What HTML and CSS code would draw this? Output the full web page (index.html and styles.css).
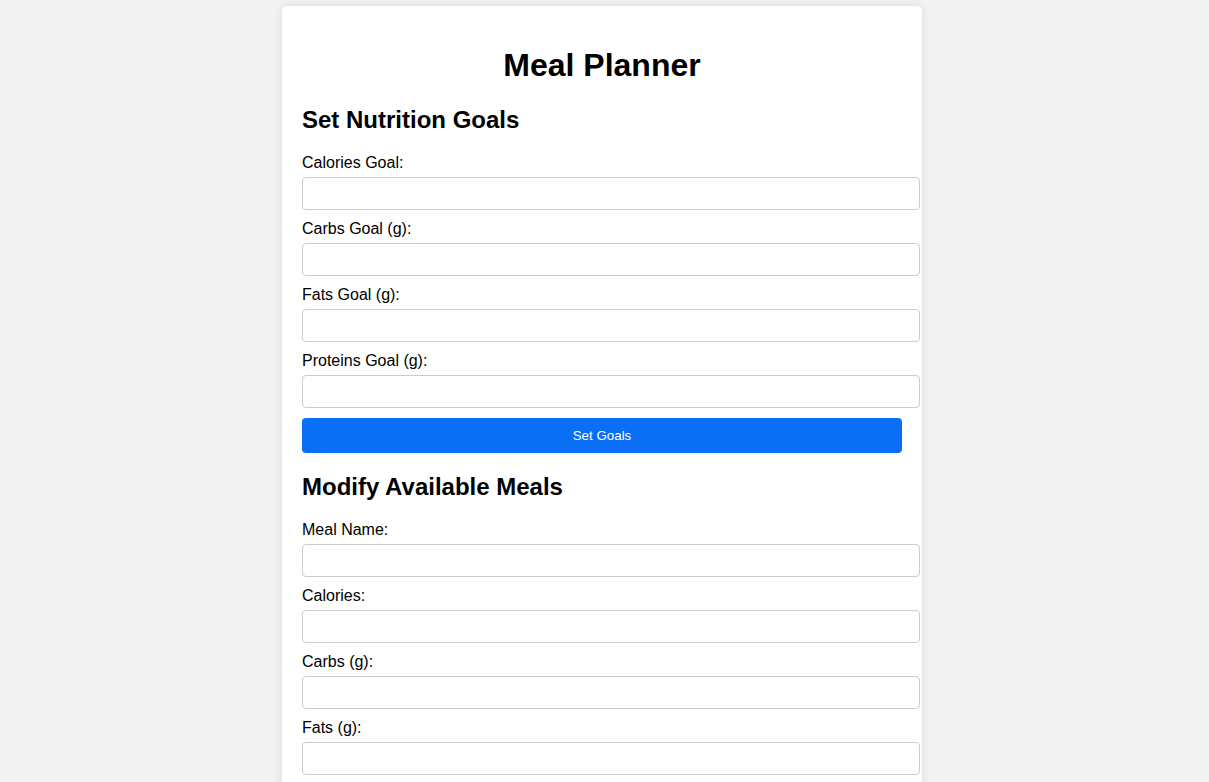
FILE: index.html
```html
<!DOCTYPE html>
<html lang="en">
<head>
<meta charset="utf-8">
<title>Meal Planner</title>
<link rel="stylesheet" href="styles.css">
</head>
<body>
<div class="container">
  <h1 class="title">Meal Planner</h1>
  <h2 class="section-title">Set Nutrition Goals</h2>
  <form class="form">
    <label class="field-label" for="cal-goal">Calories Goal:</label>
    <input class="field-input" type="number" id="cal-goal">
    <label class="field-label" for="carb-goal">Carbs Goal (g):</label>
    <input class="field-input" type="number" id="carb-goal">
    <label class="field-label" for="fat-goal">Fats Goal (g):</label>
    <input class="field-input" type="number" id="fat-goal">
    <label class="field-label" for="prot-goal">Proteins Goal (g):</label>
    <input class="field-input" type="number" id="prot-goal">
    <button class="btn" type="button">Set Goals</button>
  </form>
  <h2 class="section-title">Modify Available Meals</h2>
  <form class="form">
    <label class="field-label" for="meal-name">Meal Name:</label>
    <input class="field-input" type="text" id="meal-name">
    <label class="field-label" for="meal-cal">Calories:</label>
    <input class="field-input" type="number" id="meal-cal">
    <label class="field-label" for="meal-carb">Carbs (g):</label>
    <input class="field-input" type="number" id="meal-carb">
    <label class="field-label" for="meal-fat">Fats (g):</label>
    <input class="field-input" type="number" id="meal-fat">
    <label class="field-label" for="meal-prot">Proteins (g):</label>
    <input class="field-input" type="number" id="meal-prot">
    <button class="btn" type="button">Add Meal</button>
  </form>
</div>
</body>
</html>
```
FILE: styles.css
```css
html, body {
  margin: 0;
  padding: 0;
}
body {
  background: #f2f2f2;
  font-family: "Liberation Sans", Arial, Helvetica, sans-serif;
  color: #000;
  padding-right: 5px;
}
.container {
  width: 600px;
  margin: 6px auto 20px;
  padding: 20px;
  background: #fff;
  border-radius: 5px;
  box-shadow: 0 0 10px rgba(0, 0, 0, 0.1);
}
.title {
  font-size: 32px;
  text-align: center;
  margin: 21.44px 0;
}
.section-title {
  font-size: 24px;
  margin: 19.92px 0;
}
.form {
  margin: 0;
}
.field-label {
  display: block;
  font-size: 16px;
  line-height: 18px;
  margin-bottom: 5px;
}
.field-input {
  display: block;
  padding: 8px;
  margin: 0 0 10px;
  border: 1px solid #ccc;
  border-radius: 4px;
  font-family: "Liberation Sans", Arial, sans-serif;
  font-size: 13.33px;
  line-height: 15px;
  height: 33px;
  box-sizing: border-box;
  width: 618px;
  background: #fff;
}
.btn {
  display: block;
  width: 100%;
  height: 35px;
  padding: 10px;
  border: none;
  border-radius: 4px;
  background: #0b6ff6;
  color: #fff;
  font-family: "Liberation Sans", Arial, sans-serif;
  font-size: 13.33px;
  cursor: pointer;
}
```
